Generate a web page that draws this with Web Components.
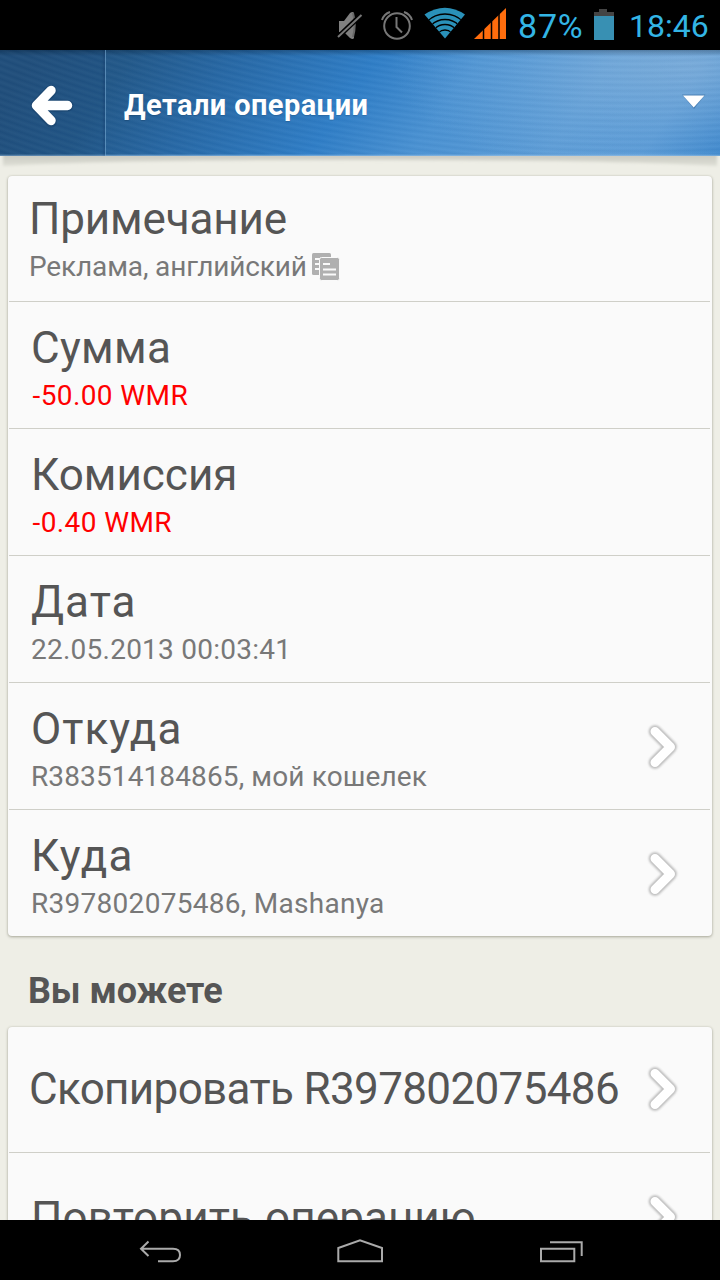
<!DOCTYPE html>
<html lang="ru">
<head>
<meta charset="utf-8">
<title>Детали операции</title>
<style>
html,body{margin:0;height:100%;overflow:hidden}
body{font-family:Roboto,"Noto Sans",sans-serif;background:#eeeee6}
</style>
</head>
<body>
<wm-screen>
  <wm-status slot="status"></wm-status>
  <wm-header slot="header">Детали операции</wm-header>
  <wm-card>
    <wm-row first style="--ts:-.15px;--ss:-.14px">Примечание<span slot="sub">Реклама, английский</span><wm-copy slot="extra"></wm-copy></wm-row>
    <wm-row red style="--ts:.3px;--ss:.4px">Сумма<span slot="sub">-50.00 WMR</span></wm-row>
    <wm-row red style="--ss:.4px">Комиссия<span slot="sub">-0.40 WMR</span></wm-row>
    <wm-row style="--ts:1px;--ss:.24px">Дата<span slot="sub">22.05.2013 00:03:41</span></wm-row>
    <wm-row style="--ts:1px;--ss:.12px">Откуда<span slot="sub">R383514184865, мой кошелек</span><wm-chevron slot="end"></wm-chevron></wm-row>
    <wm-row last style="--ts:1.3px;--ss:.28px">Куда<span slot="sub">R397802075486, Mashanya</span><wm-chevron slot="end"></wm-chevron></wm-row>
  </wm-card>
  <wm-heading>Вы можете</wm-heading>
  <wm-card>
    <wm-row action style="--ts:-.65px">Скопировать R397802075486<wm-chevron slot="end"></wm-chevron></wm-row>
    <wm-row action second style="--ts:.12px">Повторить операцию<wm-chevron slot="end"></wm-chevron></wm-row>
  </wm-card>
  <wm-nav slot="nav"></wm-nav>
</wm-screen>
<script>
function define(name, html){
  const t=document.createElement('template');
  t.innerHTML=html;
  customElements.define(name,class extends HTMLElement{
    constructor(){super();this.attachShadow({mode:'open'}).append(t.content.cloneNode(true));}
  });
}
define('wm-screen',`<style>
:host{display:flex;flex-direction:column;width:720px;height:1280px;overflow:hidden;background:#eeeee6}
main{flex:1;min-height:0;overflow:hidden;padding:20px 8px 0}
</style><slot name="status"></slot><slot name="header"></slot><main><slot></slot></main><slot name="nav"></slot>`);

define('wm-status',`<style>
:host{display:flex;height:50px;flex:none;background:#000;color:#33b5e5;justify-content:flex-end;align-items:flex-start}
svg{display:block;flex:none}
span{white-space:nowrap;line-height:52px;height:50px}
.p{font-size:34px;width:75px;letter-spacing:.8px}
.t{font-size:32px;width:80px;margin:0 11px 0 14px;letter-spacing:0}
</style>
<svg width="190" height="50" viewBox="328 0 190 50">
<path fill="#808080" d="M339 21h5l6-8q3-2 4 0v25q-1 2-4 0l-6-6h-5z"/>
<path d="M353 13c2 7 2 17 0 24" fill="none" stroke="#686868" stroke-width="2"/>
<path d="M337 38L361 15" stroke="#000" stroke-width="5"/><path d="M338 37L361.500 15" stroke="#777" stroke-width="2"/>
<g fill="none" stroke="#777" stroke-width="2"><circle cx="397" cy="26" r="12.800"/><path d="M396.500 17v10l5.500 5.500M382 20q2-6 8-8M412 20q-2-6-8-8"/></g>
<clipPath id="w"><path d="M445 38.500L424.500 14.500Q445 1 465 14.500z"/></clipPath>
<g clip-path="url(#w)"><rect x="420" y="5" width="50" height="36" fill="#2a91b9"/><g fill="none" stroke="#000" stroke-width="1.300"><circle cx="445" cy="39" r="9"/><circle cx="445" cy="39" r="14.500"/><circle cx="445" cy="39" r="19.500"/><circle cx="445" cy="39" r="25"/></g></g>
<path fill="#ff6d0d" d="M474 39L506 8v31z"/><path d="M483.500 10v30M491.500 10v30M499 10v30" stroke="#000" stroke-width="1.500"/>
</svg><span class="p">87%</span>
<svg width="22" height="50" viewBox="593 0 22 50"><path fill="#444" d="M594 12h5V9h8v3h7v4h-20z"/><path fill="#3890b3" d="M594 16h20v24h-20z"/></svg>
<span class="t">18:46</span>`);

define('wm-header',`<style>
:host{display:flex;position:relative;height:106px;flex:none;color:#fff;
background:linear-gradient(rgba(0,20,40,.3),transparent 6px,transparent 104px,rgba(165,203,235,.65) 106px),
repeating-radial-gradient(ellipse 1250px 1000px at 640px -1060px,rgba(255,255,255,.03) 0,rgba(0,30,70,.035) .3%,rgba(255,255,255,.03) .6%),
radial-gradient(ellipse 300px 120px at 690px 15px,rgba(155,190,222,.5),rgba(140,185,225,.2) 60%,transparent),
linear-gradient(125deg,#22527f 4.7%,#225889 17%,#2768a5 30%,#2f7ec7 48%,#4a92d3 61%,#5b9cd7 78%,#5598d6 90%,#3683cb 100%)}
.b{width:106px;box-sizing:border-box;border-right:1px solid rgba(130,180,220,.55);box-shadow:inset -2px 0 2px rgba(0,30,70,.15);background:rgba(0,20,50,.05)}
h1{flex:1;margin:0 0 0 18px;font:700 29px/111px Roboto,sans-serif;letter-spacing:.42px;white-space:nowrap;text-shadow:0 1px 1px rgba(0,0,0,.15)}
svg{display:block}
.s{position:absolute;left:0;top:106px}
</style><div class="b"><svg width="104" height="105" viewBox="0 50 104 105"><g fill="none" stroke-linecap="round" stroke-linejoin="round"><path d="M51 91L36.500 105.500L51 121.500M38 105.700H67.500" stroke="#123355" stroke-opacity=".3" stroke-width="12"/><path d="M51 90.500L36.500 105.500L51 120.500M38 105.500H67.500" stroke="#fff" stroke-width="9.500"/></g></svg></div>
<h1><slot></slot></h1>
<svg width="44" height="105" viewBox="676 50 44 105"><path d="M682 94.500h23.500L694 109z" fill="#124479" opacity=".35"/><path d="M683 95.500h21.500L693.700 107.500z" fill="#fff"/></svg>
<svg class="s" width="720" height="20" viewBox="0 0 720 20"><defs><linearGradient id="g" x2="0" y2="1"><stop stop-color="#c4c4bc"/><stop offset="1" stop-color="#dedfd6"/></linearGradient><filter id="f" x="-5%" y="-50%" width="110%" height="200%"><feGaussianBlur stdDeviation="1.500"/></filter></defs><path filter="url(#f)" fill="url(#g)" d="M3 -4H717V10Q610 4 360 4T3 10z"/></svg>`);

define('wm-card',`<style>
:host{display:block;position:relative;background:#fafafa;border-radius:4px;box-shadow:0 1px 3px rgba(90,90,70,.45),0 0 2px rgba(120,120,90,.2)}
</style><slot></slot>`);

define('wm-row',`<style>
:host{display:flex;box-sizing:border-box;height:127px;margin:0 2px 0 1px;padding:0 28px 0 22px;border-bottom:1px solid #cfcfc8;color:#555}
:host([first]){height:126px;padding-left:20px}
:host([last]){height:126px;border:0}
.c{flex:1;min-width:0;white-space:nowrap}
.t{font-size:44px;line-height:52px;margin-top:20px;letter-spacing:var(--ts,0)}
:host([first]) .t{margin-top:17px}
.s{display:flex;align-items:center;font-size:28px;line-height:34px;margin-top:5px;color:#787878;letter-spacing:var(--ss,.2px)}
:host([red]) .s{color:#f00;padding-left:1.5px}
.e{display:flex;align-items:center;padding-top:2px}
:host([action]){height:126px;padding-left:20px}
:host([action]) .t{margin-top:36px}
:host([action]) .e{padding-top:0;margin-top:-2px}
:host([second]) .e{padding-top:4px}
:host([second]){height:127px;padding-left:22px}
:host([second]) .t{margin-top:39px}
</style><div class="c"><div class="t"><slot></slot></div><div class="s"><slot name="sub"></slot><slot name="extra"></slot></div></div><div class="e"><slot name="end"></slot></div>`);

define('wm-chevron',`<style>:host{display:block;width:36px;height:50px}svg{display:block}</style>
<svg width="36" height="50" viewBox="0 0 36 50"><defs><filter id="b" filterUnits="userSpaceOnUse" x="0" y="0" width="36" height="50"><feGaussianBlur stdDeviation="1"/></filter></defs><g fill="none" stroke-linecap="round" stroke-linejoin="round"><path filter="url(#b)" d="M9 9.500L24.500 25L9 40.500" stroke="#bbb" stroke-width="12.500"/><path d="M9 9.500L24.500 25L9 40.500" stroke="#fff" stroke-width="9"/></g></svg>`);

define('wm-copy',`<style>:host{display:block;width:28px;height:28px;margin:-1px 0 0 5px}svg{display:block}</style>
<svg width="28" height="28" viewBox="0 0 28 28"><rect width="19" height="22" rx="1.500" fill="#b0b0b0"/><path d="M3 6h6M3 11h5M3 16h5" stroke="#fafafa" stroke-width="2"/><rect x="7.500" y="4.500" width="20" height="23" rx="2" fill="#b0b0b0" stroke="#fafafa"/><path d="M11 11h7M11 16.500h13M11 21.500h13" stroke="#fafafa" stroke-width="2"/></svg>`);

define('wm-heading',`<style>:host{display:block;height:91px;box-sizing:border-box;padding:34px 20px 0;font-size:36px;font-weight:700;line-height:42px;color:#555;letter-spacing:-.1px}</style><slot></slot>`);

define('wm-nav',`<style>:host{display:block;height:60px;flex:none;background:#000;position:relative}svg{display:block}</style>
<svg width="720" height="60" viewBox="0 1220 720 60"><g fill="none" stroke="#aaa" stroke-width="2"><path d="M148.500 1241.500L141 1248.700L148.500 1256M141 1248.700H173Q180 1248.700 180 1255T173 1261.300H158"/><path d="M338.300 1261.300V1248L360 1240.300L382 1248V1261.300z"/><path d="M541 1248.700h33.300v12.600H541zM550 1242.300h31.700V1256"/></g></svg>`);
</script>
</body>
</html>
